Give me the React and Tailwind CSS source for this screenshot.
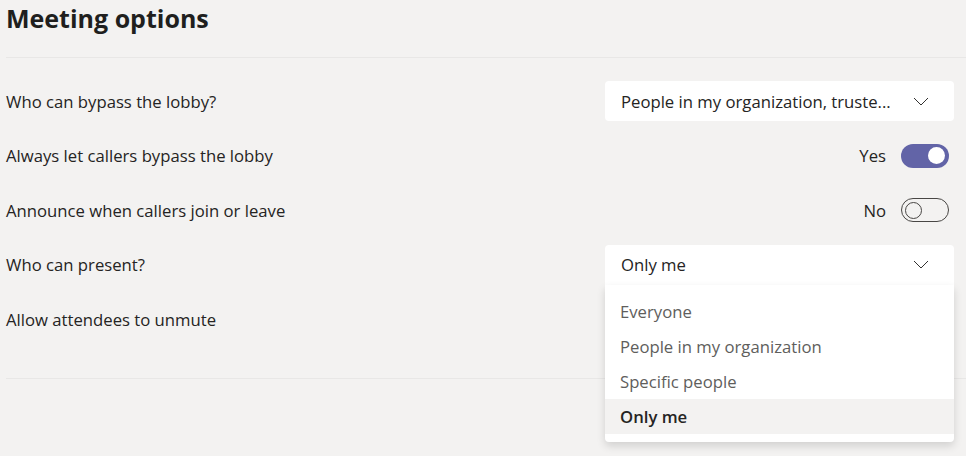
import React from 'react';

function Chevron() {
    return (
        <svg width="16" height="9" viewBox="0 0 16 9" fill="none" className="shrink-0">
            <path d="M1 1 L8 8 L15 1" stroke="#323130" strokeWidth="1" />
        </svg>
    );
}

function Toggle({ on }) {
    return on ? (
        <div className="w-[48px] h-[24px] rounded-full bg-[#6264a7] flex items-center justify-end px-[4px]">
            <div className="w-[17px] h-[17px] rounded-full bg-white" />
        </div>
    ) : (
        <div className="w-[48px] h-[24px] rounded-full border border-[#484644] flex items-center justify-start px-[3px]">
            <div className="w-[17px] h-[17px] rounded-full border border-[#484644]" />
        </div>
    );
}

function Row({ label, children }) {
    return (
        <div className="h-[54.5px] flex items-center justify-between">
            <span>{label}</span>
            {children}
        </div>
    );
}

export default function App() {
    return (
        <div className="w-[966px] h-[456px] overflow-hidden bg-[#f3f2f1] text-[#252423] font-['Open_Sans',sans-serif] text-[16.7px] pl-[6px]">
            {/* Header */}
            <div className="h-[58px] border-b border-[#e8e7e6]">
                <h1 className="text-[25px] font-bold leading-[34px] pt-[1px] text-[#201f1e]">Meeting options</h1>
            </div>

            <div className="pr-[12px] pt-[16px]">
                <Row label="Who can bypass the lobby?">
                    <div className="w-[349px] h-[40px] bg-white rounded-[4px] flex items-center justify-between pl-[16px] pr-[25px]">
                        <span>People in my organization, truste...</span>
                        <Chevron />
                    </div>
                </Row>
                <Row label="Always let callers bypass the lobby">
                    <div className="flex items-center gap-[15px] mr-[5px]">
                        <span>Yes</span>
                        <Toggle on />
                    </div>
                </Row>
                <Row label="Announce when callers join or leave">
                    <div className="flex items-center gap-[15px] mr-[5px]">
                        <span>No</span>
                        <Toggle on={false} />
                    </div>
                </Row>
                <Row label="Who can present?">
                    <div className="relative w-[349px] h-[40px]">
                        <div className="h-[40px] bg-white rounded-t-[4px] flex items-center justify-between pl-[16px] pr-[25px]">
                            <span>Only me</span>
                            <Chevron />
                        </div>
                        <div className="absolute left-0 right-0 top-[40px] z-10 bg-white rounded-b-[4px] pt-[9px] pb-[8px] shadow-[0_4px_8px_rgba(0,0,0,0.14)]">
                            {['Everyone', 'People in my organization', 'Specific people'].map((item) => (
                                <div key={item} className="h-[35px] flex items-center px-[15px] text-[#605e5c]">
                                    {item}
                                </div>
                            ))}
                            <div className="h-[35px] flex items-center px-[15px] bg-[#f3f2f1] font-semibold text-[#252423]">
                                Only me
                            </div>
                        </div>
                    </div>
                </Row>
                <Row label="Allow attendees to unmute" />
                <div className="mt-[31px] border-b border-[#e8e7e6] mr-[-12px]" />
            </div>
        </div>
    );
}
